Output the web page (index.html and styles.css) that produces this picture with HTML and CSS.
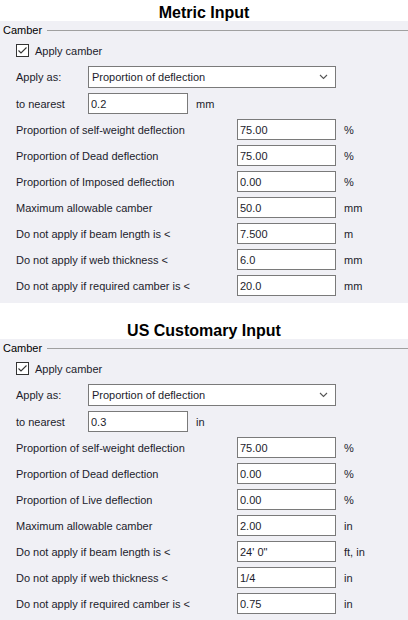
FILE: index.html
```html
<!DOCTYPE html>
<html lang="en">
  <head>
    <meta charset="UTF-8">
    <title>Camber Settings</title>
    <link rel="stylesheet" href="styles.css">
  </head>
  <body>
    <section class="unit-section">
      <h1 class="title">Metric Input</h1>
      <div class="panel">
        <div class="legend"><span>Camber</span></div>
        <label class="check-row">
          <svg class="check-box" width="13" height="13" viewBox="0 0 13 13">
            <rect x="0.5" y="0.5" width="12" height="12" fill="#fff" stroke="#333"/>
            <polyline points="2.5,6.5 5,9 10.5,3.5" fill="none" stroke="#333" stroke-width="1.1"/>
          </svg>
          Apply camber
        </label>
        <div class="row select-row">
          <span class="short-label">Apply as:</span>
          <div class="dropdown">
            <span>Proportion of deflection</span>
            <svg width="9" height="6" viewBox="0 0 9 6"><polyline points="1,1 4.5,4.5 8,1" fill="none" stroke="#555" stroke-width="1.1"/></svg>
          </div>
        </div>
        <div class="row">
          <span class="short-label">to nearest</span>
          <input class="small-field" type="text" value="0.2">
          <span class="unit">mm</span>
        </div>
        <div class="row">
          <span class="long-label">Proportion of self-weight deflection</span>
          <input class="field" type="text" value="75.00">
          <span class="unit">%</span>
        </div>
        <div class="row">
          <span class="long-label">Proportion of Dead deflection</span>
          <input class="field" type="text" value="75.00">
          <span class="unit">%</span>
        </div>
        <div class="row">
          <span class="long-label">Proportion of Imposed deflection</span>
          <input class="field" type="text" value="0.00">
          <span class="unit">%</span>
        </div>
        <div class="row">
          <span class="long-label">Maximum allowable camber</span>
          <input class="field" type="text" value="50.0">
          <span class="unit">mm</span>
        </div>
        <div class="row">
          <span class="long-label">Do not apply if beam length is &lt;</span>
          <input class="field" type="text" value="7.500">
          <span class="unit">m</span>
        </div>
        <div class="row">
          <span class="long-label">Do not apply if web thickness &lt;</span>
          <input class="field" type="text" value="6.0">
          <span class="unit">mm</span>
        </div>
        <div class="row">
          <span class="long-label">Do not apply if required camber is &lt;</span>
          <input class="field" type="text" value="20.0">
          <span class="unit">mm</span>
        </div>
      </div>
    </section>

    <section class="unit-section second">
      <h1 class="title">US Customary Input</h1>
      <div class="panel">
        <div class="legend"><span>Camber</span></div>
        <label class="check-row">
          <svg class="check-box" width="13" height="13" viewBox="0 0 13 13">
            <rect x="0.5" y="0.5" width="12" height="12" fill="#fff" stroke="#333"/>
            <polyline points="2.5,6.5 5,9 10.5,3.5" fill="none" stroke="#333" stroke-width="1.1"/>
          </svg>
          Apply camber
        </label>
        <div class="row select-row">
          <span class="short-label">Apply as:</span>
          <div class="dropdown">
            <span>Proportion of deflection</span>
            <svg width="9" height="6" viewBox="0 0 9 6"><polyline points="1,1 4.5,4.5 8,1" fill="none" stroke="#555" stroke-width="1.1"/></svg>
          </div>
        </div>
        <div class="row">
          <span class="short-label">to nearest</span>
          <input class="small-field" type="text" value="0.3">
          <span class="unit">in</span>
        </div>
        <div class="row">
          <span class="long-label">Proportion of self-weight deflection</span>
          <input class="field" type="text" value="75.00">
          <span class="unit">%</span>
        </div>
        <div class="row">
          <span class="long-label">Proportion of Dead deflection</span>
          <input class="field" type="text" value="0.00">
          <span class="unit">%</span>
        </div>
        <div class="row">
          <span class="long-label">Proportion of Live deflection</span>
          <input class="field" type="text" value="0.00">
          <span class="unit">%</span>
        </div>
        <div class="row">
          <span class="long-label">Maximum allowable camber</span>
          <input class="field" type="text" value="2.00">
          <span class="unit">in</span>
        </div>
        <div class="row">
          <span class="long-label">Do not apply if beam length is &lt;</span>
          <input class="field" type="text" value="24' 0&quot;">
          <span class="unit">ft, in</span>
        </div>
        <div class="row">
          <span class="long-label">Do not apply if web thickness &lt;</span>
          <input class="field" type="text" value="1/4">
          <span class="unit">in</span>
        </div>
        <div class="row">
          <span class="long-label">Do not apply if required camber is &lt;</span>
          <input class="field" type="text" value="0.75">
          <span class="unit">in</span>
        </div>
      </div>
    </section>
  </body>
</html>
```

FILE: styles.css
```css
body {
  margin: 0;
  font-family: "Liberation Sans", Arial, sans-serif;
  font-size: 11px;
  color: #1c1c2c;
  background-color: #fff;
}

.second {
  margin-top: 15px;
}

.title {
  margin: 0;
  height: 16px;
  padding-top: 5px;
  line-height: 16px;
  font-size: 16px;
  font-weight: bold;
  text-align: center;
  color: #000;
}

.panel {
  display: flex;
  flex-direction: column;
  background-color: #f0f0f5;
  padding-bottom: 7px;
}

.legend {
  display: flex;
  align-items: center;
  height: 18px;
  padding-left: 3px;
  color: #000;
}

.legend::after {
  content: "";
  flex: 1;
  margin-left: 5px;
  border-top: 1px solid #a0a0a0;
}

.check-row {
  display: flex;
  align-items: center;
  height: 13px;
  margin-top: 5px;
  margin-left: 16px;
}

.check-box {
  margin-right: 6px;
}

.row {
  display: flex;
  align-items: center;
  height: 21px;
  margin-top: 5px;
  padding-left: 16px;
}

.select-row {
  height: 22px;
  margin-top: 9px;
}

.short-label {
  width: 72px;
}

.long-label {
  width: 221px;
}

.dropdown {
  display: flex;
  align-items: center;
  justify-content: space-between;
  box-sizing: border-box;
  width: 248px;
  height: 22px;
  padding: 0 7px 0 3px;
  background-color: #fff;
  border: 1px solid #7a7a7a;
}

input[type="text"] {
  box-sizing: border-box;
  height: 21px;
  margin: 0;
  padding: 0 2px;
  border: 1px solid #7a7a7a;
  border-radius: 0;
  background-color: #fff;
  font-family: inherit;
  font-size: 11px;
  color: #1c1c2c;
  outline: none;
}

.small-field {
  width: 100px;
}

.field {
  width: 99px;
}

.unit {
  margin-left: 8px;
}
```
